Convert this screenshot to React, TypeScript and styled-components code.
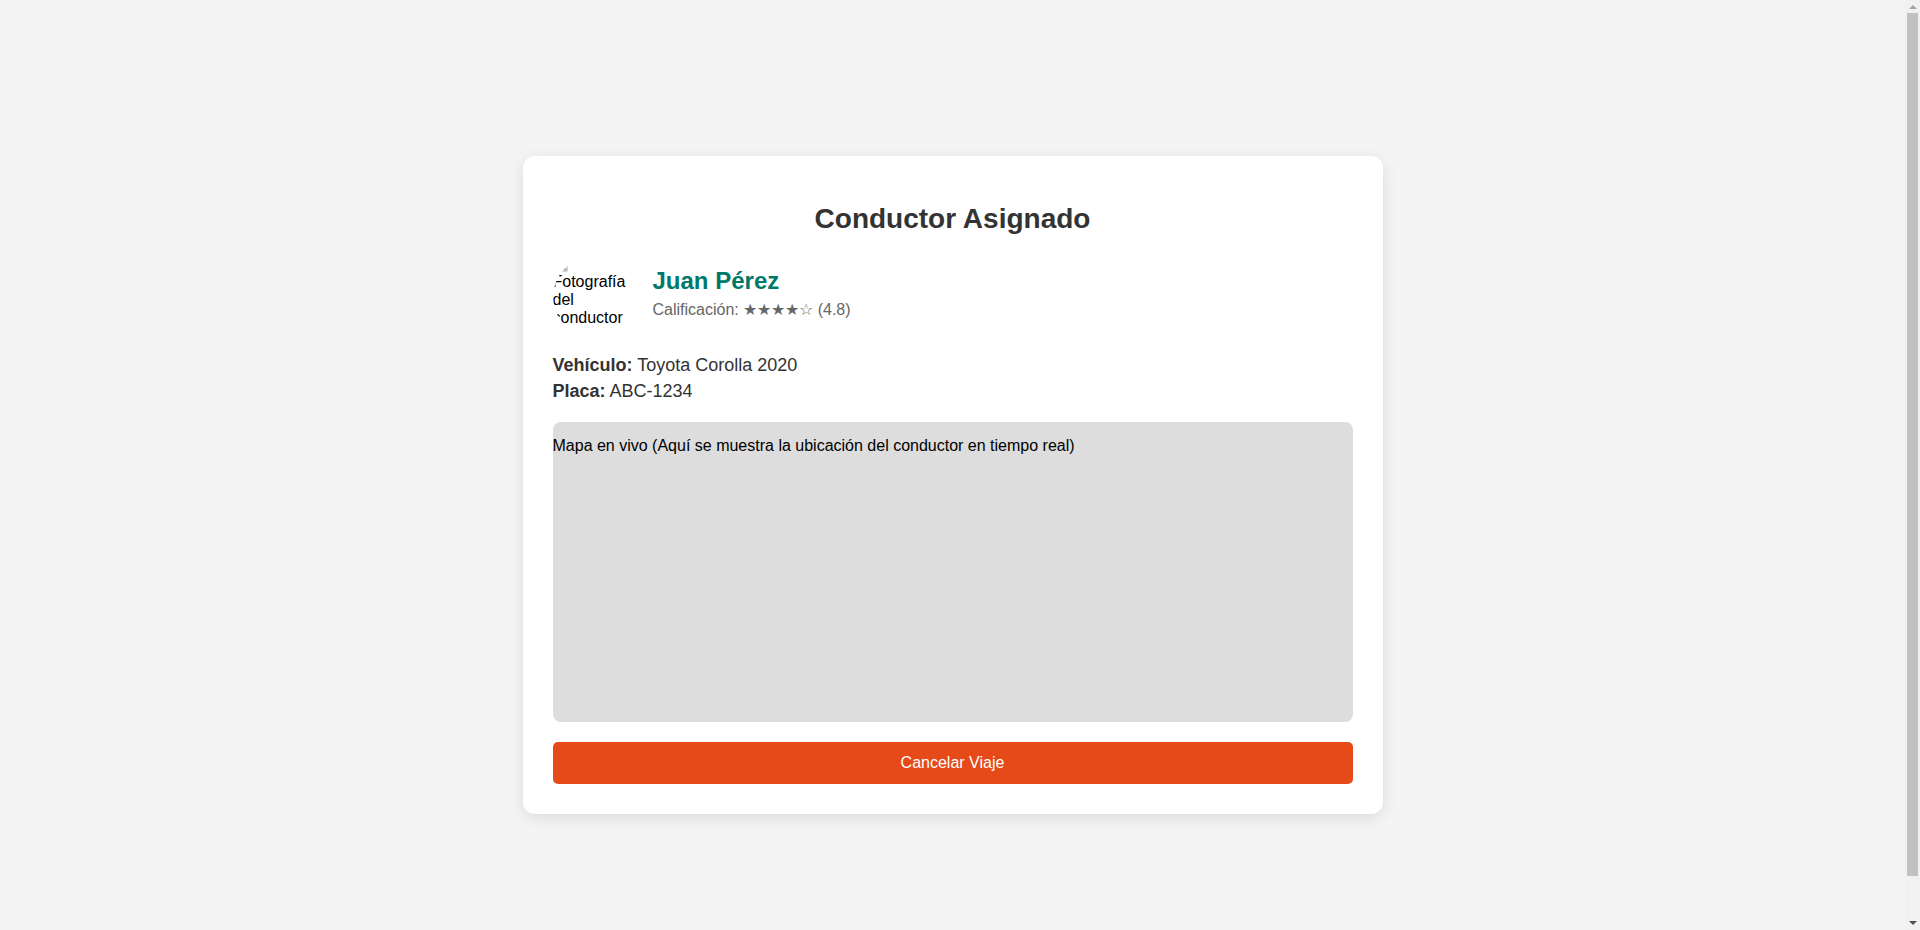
import React from "react";
import styled, { createGlobalStyle } from "styled-components";

const GlobalStyle = createGlobalStyle`
  html {
    margin: 0;
  }
  body {
    margin: 0;
    padding: 20px 35px 20px 20px;
    min-height: 100vh;
    background: #f4f4f4;
    font-family: "Liberation Sans", Arial, Helvetica, sans-serif;
    color: #333;
    display: flex;
    justify-content: center;
    align-items: center;
  }
  #root {
    width: 100%;
    display: flex;
    justify-content: center;
  }
`;

const ScrollTrack = styled.div`
  position: fixed;
  top: 0;
  right: 0;
  width: 15px;
  height: 100vh;
  background: #f1f1f1;
  display: flex;
  flex-direction: column;
  align-items: center;
`;

const ScrollArrow = styled.div<{ $down?: boolean; $height: number }>`
  flex: 0 0 ${(p) => p.$height}px;
  width: 100%;
  display: flex;
  align-items: center;
  justify-content: center;
  &::before {
    content: "";
    width: 0;
    height: 0;
    border-left: 4px solid transparent;
    border-right: 4px solid transparent;
    ${(p) =>
      p.$down
        ? "border-top: 4px solid #505050;"
        : "border-bottom: 4px solid #a3a3a3;"}
  }
`;

const ScrollThumb = styled.div`
  flex: 0 0 863px;
  width: 11px;
  background: #c1c1c1;
`;

const ScrollSpacer = styled.div`
  flex: 1;
`;

const Card = styled.div`
  width: 100%;
  max-width: 800px;
  padding: 30px;
  background: #fff;
  border-radius: 12px;
  box-shadow: 0 4px 15px rgba(0, 0, 0, 0.1);
`;

const Title = styled.h1`
  margin: 17px 0 22px;
  font-size: 28px;
  font-weight: 700;
  line-height: normal;
  text-align: center;
  color: #333;
`;

const DriverRow = styled.div`
  display: flex;
  align-items: center;
  margin-bottom: 18px;
`;

const Photo = styled.div`
  flex: 0 0 80px;
  width: 80px;
  height: 80px;
  margin-right: 20px;
  border-radius: 50%;
  overflow: hidden;
  font-size: 16px;
  line-height: normal;
  color: #000;
`;

const BrokenIcon = styled.svg`
  display: block;
  width: 16px;
  height: 16px;
`;

const DriverInfo = styled.div`
  display: flex;
  flex-direction: column;
  padding-bottom: 9px;
`;

const DriverName = styled.h2`
  margin: 0;
  font-size: 24px;
  font-weight: 700;
  line-height: normal;
  color: #00796b;
`;

const Rating = styled.p`
  margin: 5px 0 0;
  font-size: 16px;
  line-height: normal;
  color: #666;
`;

const VehicleInfo = styled.div`
  display: flex;
  flex-direction: column;
  gap: 5px;
  margin-bottom: 20px;
  font-size: 18px;
  line-height: normal;
  color: #333;
`;

const InfoLine = styled.p`
  margin: 0;
`;

const Label = styled.strong`
  font-weight: 700;
`;

const MapBox = styled.div`
  height: 300px;
  box-sizing: border-box;
  padding-top: 15px;
  background: #ddd;
  border-radius: 8px;
  font-size: 16px;
  line-height: normal;
  color: #000;
`;

const CancelButton = styled.button`
  display: block;
  width: 100%;
  margin-top: 20px;
  padding: 12px;
  border: none;
  border-radius: 5px;
  background: #e64a19;
  color: #fff;
  font-family: "Liberation Sans", Arial, Helvetica, sans-serif;
  font-size: 16px;
  line-height: normal;
  cursor: pointer;
`;

export default function App() {
  return (
    <>
      <GlobalStyle />
      <Card>
        <Title>Conductor Asignado</Title>
        <DriverRow>
          <Photo role="img" aria-label="Fotografía del conductor">
            <BrokenIcon viewBox="0 0 16 16">
              <path d="M2 1h8l4 4v9H2z" fill="#fff" stroke="#9e9e9e" strokeWidth="1" />
              <path d="M3 13l4-5 3 3 2-2 1 4z" fill="#4caf50" />
              <rect x="3" y="3" width="5" height="4" fill="#64b5f6" />
            </BrokenIcon>
            Fotografía del conductor
          </Photo>
          <DriverInfo>
            <DriverName>Juan Pérez</DriverName>
            <Rating>Calificación: ★★★★☆ (4.8)</Rating>
          </DriverInfo>
        </DriverRow>
        <VehicleInfo>
          <InfoLine>
            <Label>Vehículo:</Label> Toyota Corolla 2020
          </InfoLine>
          <InfoLine>
            <Label>Placa:</Label> ABC-1234
          </InfoLine>
        </VehicleInfo>
        <MapBox>Mapa en vivo (Aquí se muestra la ubicación del conductor en tiempo real)</MapBox>
        <CancelButton type="button">Cancelar Viaje</CancelButton>
      </Card>
      <ScrollTrack aria-hidden="true">
        <ScrollArrow $height={13} />
        <ScrollThumb />
        <ScrollSpacer />
        <ScrollArrow $down $height={15} />
      </ScrollTrack>
    </>
  );
}
